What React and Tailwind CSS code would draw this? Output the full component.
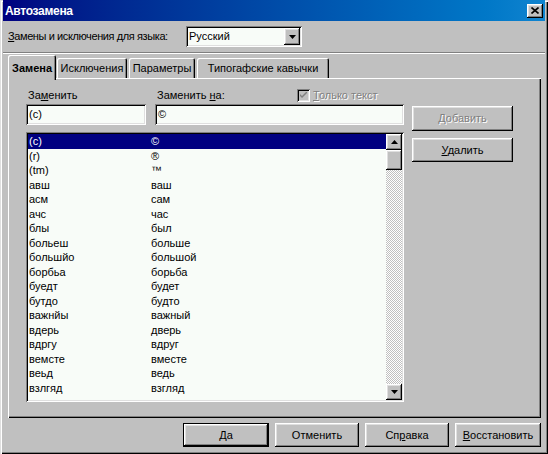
const RAISED = 'shadow-[inset_-1px_-1px_#000,inset_1px_1px_#fff,inset_-2px_-2px_#808080,inset_2px_2px_#dfdfdf]'
const SUNKEN = 'shadow-[inset_1px_1px_#808080,inset_-1px_-1px_#fff,inset_2px_2px_#000,inset_-2px_-2px_#dfdfdf]'

const ROWS = [
  ['(c)', '©'],
  ['(r)', '®'],
  ['(tm)', '™'],
  ['авш', 'ваш'],
  ['асм', 'сам'],
  ['ачс', 'час'],
  ['блы', 'был'],
  ['больеш', 'больше'],
  ['большйо', 'большой'],
  ['борбьа', 'борьба'],
  ['буедт', 'будет'],
  ['бутдо', 'будто'],
  ['важнйы', 'важный'],
  ['вдерь', 'дверь'],
  ['вдргу', 'вдруг'],
  ['вемсте', 'вместе'],
  ['веьд', 'ведь'],
  ['взлгяд', 'взгляд'],
]

const TABS = [
  { label: 'Исключения', w: 'w-[70px]', ml: 'ml-[1px]' },
  { label: 'Параметры', w: 'w-[66px]', ml: 'ml-[2px]' },
  { label: 'Типогафские кавычки', w: 'w-[132px]', ml: 'ml-[2px]' },
]

function Btn({ children, className = '', def = false }) {
  return (
    <div className={`h-full flex items-center justify-center bg-[#c0c0c0] ${def ? 'border border-black' : ''} ${className}`}>
      <div className={`w-full h-full flex items-center justify-center ${RAISED}`}>{children}</div>
    </div>
  )
}

function Arrow({ up }) {
  return (
    <svg width="7" height="4" viewBox="0 0 7 4">
      {up ? <path d="M3.5 0 L7 4 L0 4 Z" fill="#000" /> : <path d="M0 0 L7 0 L3.5 4 Z" fill="#000" />}
    </svg>
  )
}

export default function App() {
  return (
    <div className="w-[548px] h-[454px] bg-[#c0c0c0] overflow-hidden text-[11px] text-black font-['Liberation_Sans',Arial,sans-serif] shadow-[inset_1px_1px_#dfdfdf,inset_2px_2px_#fff,inset_-1px_-1px_#000,inset_-2px_-2px_#808080]">
      {/* Заголовок */}
      <div className="mx-[3px] h-[21px] bg-gradient-to-r from-[#000080] to-[#1084d0] flex items-center justify-between pl-[2px] pr-[2px]">
        <span className="text-white font-bold text-[12px] tracking-[-0.3px]">Автозамена</span>
        <div className={`w-[16px] h-[14px] bg-[#c0c0c0] flex items-center justify-center ${RAISED}`}>
          <svg width="8" height="7" viewBox="0 0 8 7">
            <path d="M0.5 0.5 L7.5 6.5 M7.5 0.5 L0.5 6.5" stroke="#000" strokeWidth="1.6" />
          </svg>
        </div>
      </div>

      {/* Язык */}
      <div className="h-[31px] flex items-center pl-[8px]">
        <span className="w-[178px] tracking-[-0.4px]"><span className="underline">З</span>амены и исключения для языка:</span>
        <div className={`w-[116px] h-[21px] bg-[#f8fcf8] flex items-center pl-[3px] pr-[2px] ${SUNKEN}`}>
          <span className="flex-1">Русский</span>
          <div className={`w-[16px] h-[17px] bg-[#c0c0c0] flex items-center justify-center ${RAISED}`}>
            <Arrow />
          </div>
        </div>
      </div>
      <div className="mx-[3px] h-[1px] bg-[#808080]" />
      <div className="mx-[3px] h-[1px] bg-white" />

      {/* Вкладки */}
      <div className="pl-[8px] h-[24px] flex items-end">
        <div className="relative z-10 w-[48px] h-[25px] -mb-[2px] bg-[#c0c0c0] rounded-t-[2px] shadow-[inset_1px_1px_#fff,inset_-1px_0_#000,inset_-2px_0_#808080] flex items-start justify-center pt-[5px] font-bold">
          Замена
        </div>
        {TABS.map((t) => (
          <div
            key={t.label}
            className={`${t.w} ${t.ml} h-[20px] bg-[#c0c0c0] rounded-t-[2px] shadow-[inset_1px_1px_#fff,inset_-1px_0_#000,inset_-2px_0_#808080] flex items-center justify-center pt-[1px]`}
          >
            {t.label}
          </div>
        ))}
      </div>

      {/* Панель */}
      <div className="ml-[8px] w-[533px] h-[340px] shadow-[inset_1px_1px_#fff,inset_-1px_-1px_#000,inset_-2px_-2px_#808080] pl-[18px] pt-[9px] flex gap-[8px]">
        <div className="w-[378px] flex flex-col">
          <div className="h-[17px] flex items-center">
            <span className="ml-[2px] w-[129px]">За<span className="underline">м</span>енить</span>
            <span className="w-[140px]">Заменить <span className="underline">н</span>а:</span>
            <div className="w-[13px] h-[13px] bg-[#c0c0c0] flex items-center justify-center shadow-[inset_1px_1px_#808080,inset_-1px_-1px_#fff,inset_2px_2px_#000,inset_-2px_-2px_#dfdfdf]">
              <svg width="7" height="7" viewBox="0 0 7 7">
                <path d="M0 2 L0 4 L2 6 L7 1 L7 -1 L2 4 Z" fill="#808080" />
              </svg>
            </div>
            <span className="ml-[3px] text-[#808080] [text-shadow:1px_1px_#fff]"><span className="underline">Т</span>олько текст</span>
          </div>
          <div className="h-[21px] flex gap-[9px]">
            <div className={`w-[120px] h-full bg-[#f8fcf8] flex items-center pl-[3px] ${SUNKEN}`}>(c)</div>
            <div className={`w-[249px] h-full bg-[#f8fcf8] flex items-center pl-[3px] ${SUNKEN}`}>©</div>
          </div>
          <div className={`mt-[7px] h-[270px] bg-[#f8fcf8] p-[2px] flex ${SUNKEN}`}>
            <div className="flex-1 flex flex-col">
              {ROWS.map(([a, b], i) => (
                <div
                  key={a}
                  className={`h-[14.5px] flex items-center pl-[1px] ${i === 0 ? 'bg-[#000080] text-white' : ''}`}
                >
                  <span className="w-[122px]">{a}</span>
                  <span>{b}</span>
                </div>
              ))}
            </div>
            <div className="w-[16px] flex flex-col">
              <div className={`h-[16px] bg-[#c0c0c0] flex items-center justify-center ${RAISED}`}>
                <Arrow up />
              </div>
              <div className={`h-[20px] bg-[#c0c0c0] ${RAISED}`} />
              <div className="flex-1 bg-[repeating-conic-gradient(#fff_0_25%,#c0c0c0_0_50%)] bg-[length:2px_2px]" />
              <div className={`h-[16px] bg-[#c0c0c0] flex items-center justify-center ${RAISED}`}>
                <Arrow />
              </div>
            </div>
          </div>
        </div>
        <div className="w-[101px] flex flex-col">
          <div className="mt-[19px] h-[25px]">
            <Btn>
              <span className="text-[#808080] [text-shadow:1px_1px_#fff]"><span className="underline">Д</span>обавить</span>
            </Btn>
          </div>
          <div className="mt-[7px] h-[24px]">
            <Btn>
              <span><span className="underline">У</span>далить</span>
            </Btn>
          </div>
        </div>
      </div>

      {/* Кнопки */}
      <div className="mt-[5px] h-[24px] flex gap-[6px] pl-[183px]">
        <Btn def className="w-[86px]">Да</Btn>
        <Btn className="w-[84px]">Отменить</Btn>
        <Btn className="w-[84px]">
          <span>Сп<span className="underline">р</span>авка</span>
        </Btn>
        <Btn className="w-[86px]">
          <span><span className="underline">В</span>осстановить</span>
        </Btn>
      </div>
    </div>
  )
}
